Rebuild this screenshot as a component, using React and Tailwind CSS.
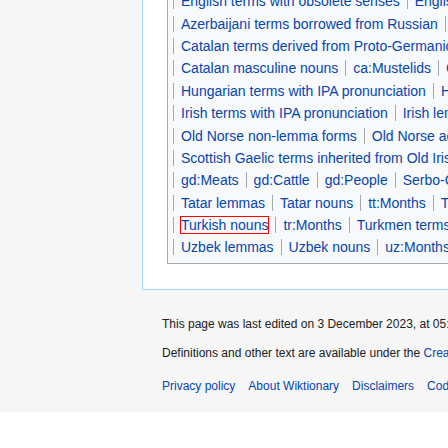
import React from "react";

const rows = [
  ["English terms with obsolete senses", "English terms with quotations"],
  ["Azerbaijani terms borrowed from Russian", "Azerbaijani terms derived from Russian"],
  ["Catalan terms derived from Proto-Germanic", "Catalan terms derived from Latin"],
  ["Catalan masculine nouns", "ca:Mustelids", "Catalan lemmas"],
  ["Hungarian terms with IPA pronunciation", "Hungarian lemmas"],
  ["Irish terms with IPA pronunciation", "Irish lemmas", "Irish nouns"],
  ["Old Norse non-lemma forms", "Old Norse adjective forms"],
  ["Scottish Gaelic terms inherited from Old Irish"],
  ["gd:Meats", "gd:Cattle", "gd:People", "Serbo-Croatian lemmas"],
  ["Tatar lemmas", "Tatar nouns", "tt:Months", "Turkish lemmas"],
  ["Turkish nouns", "tr:Months", "Turkmen terms with IPA pronunciation"],
  ["Uzbek lemmas", "Uzbek nouns", "uz:Months"],
];

const places = [
  "Privacy policy",
  "About Wiktionary",
  "Disclaimers",
  "Code of Conduct",
  "Developers",
  "Statistics",
];

const App = () => {
  return (
    <div className="w-[448px] h-[448px] overflow-hidden bg-white font-['Liberation_Sans',Arial,sans-serif]">
      <div className="bg-[#f6f6f6] w-[900px] -mt-[10px]">
        {/* content */}
        <div className="ml-[142px] bg-white border-l border-b border-[#a7d7f9] pl-[24px] pb-[25px]">
          <div className="bg-[#f8f9fa] border-l border-b border-[#a2a9b1] pl-[5px] pb-[4px]">
            {rows.map((row, i) => (
              <div
                key={i}
                className="h-[22.4px] flex items-center whitespace-nowrap text-[14px] text-[#0645ad]"
              >
                {row.map((item) => (
                  <span
                    key={item}
                    className="border-l border-[#a2a9b1] px-[7px] leading-[16px]"
                  >
                    {item === "Turkish nouns" ? (
                      <span className="inline-block outline outline-1 outline-[#ff0000] leading-[16px]">
                        {item}
                      </span>
                    ) : (
                      item
                    )}
                  </span>
                ))}
              </div>
            ))}
          </div>
        </div>

        {/* footer */}
        <div className="pl-[162px] pt-[26px] pb-[18px] text-[12px] text-[#202122] whitespace-nowrap">
          <p className="leading-[16px]">
            This page was last edited on 3 December 2023, at 05:54.
          </p>
          <p className="leading-[16px] mt-[13.5px]">
            Definitions and other text are available under the{" "}
            <a className="text-[#0645ad]" href="#">
              Creative Commons Attribution-ShareAlike License
            </a>
            ; additional terms may apply.
          </p>
          <div className="leading-[16px] mt-[16.5px] flex gap-[13px] text-[#0645ad]">
            {places.map((p) => (
              <a key={p} href="#">
                {p}
              </a>
            ))}
          </div>
        </div>
      </div>
    </div>
  );
};

export default App;
